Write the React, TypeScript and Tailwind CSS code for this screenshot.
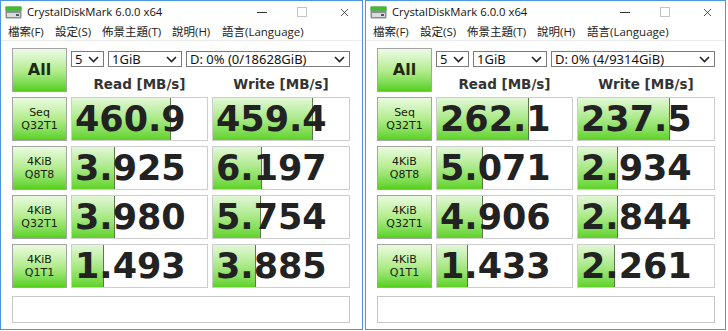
import { X } from 'lucide-react';

type Row = { top: string; bottom: string; read: number; write: number };

const leftRows: Row[] = [
  { top: 'Seq', bottom: 'Q32T1', read: 460.9, write: 459.4 },
  { top: '4KiB', bottom: 'Q8T8', read: 3.925, write: 6.197 },
  { top: '4KiB', bottom: 'Q32T1', read: 3.98, write: 5.754 },
  { top: '4KiB', bottom: 'Q1T1', read: 1.493, write: 3.885 },
];

const rightRows: Row[] = [
  { top: 'Seq', bottom: 'Q32T1', read: 262.1, write: 237.5 },
  { top: '4KiB', bottom: 'Q8T8', read: 5.071, write: 2.934 },
  { top: '4KiB', bottom: 'Q32T1', read: 4.906, write: 2.844 },
  { top: '4KiB', bottom: 'Q1T1', read: 1.433, write: 2.261 },
];

const menuItems = [
  { label: '檔案(F)', w: 'w-[47px]' },
  { label: '設定(S)', w: 'w-[47px]' },
  { label: '佈景主題(T)', w: 'w-[70px]' },
  { label: '說明(H)', w: 'w-[50px]' },
  { label: '語言(Language)', w: '' },
];

// log scale meter, same as the app
const meter = (v: number) => Math.max(0, Math.min(1, (1 + Math.log10(v)) / 5)) * 100;

const fmt = (v: number) => (v >= 100 ? v.toFixed(1) : v.toFixed(3));

const DiskIcon = () => (
  <svg width="17" height="13" viewBox="0 0 17 13">
    <rect x="0.5" y="0.5" width="16" height="12" rx="1" fill="#8a8f93" />
    <rect x="0.5" y="0.5" width="16" height="4" fill="#3fbf2a" />
    <rect x="2" y="7" width="13" height="4" fill="#d9dcde" />
    <rect x="11" y="8" width="3" height="2" fill="#555" />
  </svg>
);

const Chevron = () => (
  <svg width="11" height="7" viewBox="0 0 11 7" className="shrink-0">
    <path d="M1 1 L5.5 5.5 L10 1" fill="none" stroke="#222" strokeWidth="1.6" />
  </svg>
);

const Select = ({ label, className }: { label: string; className: string }) => (
  <div
    className={`flex h-[16px] items-center justify-between border border-[#7a7a7a] bg-white pl-[3px] pr-[4px] text-[13px] leading-none text-[#111] ${className}`}
  >
    <span>{label}</span>
    <Chevron />
  </div>
);

const LabelButton = ({ top, bottom }: { top: string; bottom: string }) => (
  <div className="flex h-[44px] flex-col items-center justify-center border border-[#a4a4a4] bg-linear-to-b from-[#eafbe0] via-[#b3ec8c] to-[#55d112] font-['DejaVu_Sans'] text-[11px] leading-[13px] text-[#16220d]">
    <span>{top}</span>
    <span>{bottom}</span>
  </div>
);

const ValueCell = ({ value }: { value: number }) => (
  <div className="relative h-[44px] overflow-hidden border border-[#cdcdcd] bg-white">
    <div
      className="absolute inset-y-0 left-0 border-r border-[#5b7a4c] bg-linear-to-b from-[#e2f7d6] via-[#a9e985] to-[#5fd322]"
      style={{ width: `${meter(value)}%` }}
    />
    <div className="relative flex h-full items-center pl-[3px] font-['DejaVu_Sans'] text-[35px] font-bold leading-none text-[#222]">
      {fmt(value)}
    </div>
  </div>
);

const Window = ({ drive, rows, width }: { drive: string; rows: Row[]; width: string }) => (
  <div className={`flex h-[330px] shrink-0 flex-col border border-[#4b97dc] bg-white ${width}`}>
    {/* Title bar */}
    <div className="flex h-[22px] items-center">
      <div className="ml-[4px] mr-[5px] mt-[1px]">
        <DiskIcon />
      </div>
      <span className="mt-[1px] font-['Open_Sans'] text-[11.3px] text-[#111]">CrystalDiskMark 6.0.0 x64</span>
      <div className="ml-auto flex items-center">
        <div className="mr-[30px] h-px w-[10px] bg-[#333]" />
        <div className="mr-[31px] h-[10px] w-[10px] border border-[#c4c4c4]" />
        <X className="mr-[11px] h-[13px] w-[13px] text-[#222]" strokeWidth={1.4} />
      </div>
    </div>

    {/* Menu */}
    <div className="flex h-[18px] items-center border-b border-[#ececec] pl-[7px] font-['Open_Sans','Noto_Sans_CJK_TC',sans-serif] text-[11.5px] text-[#222]">
      {menuItems.map((m) => (
        <span key={m.label} className={`shrink-0 whitespace-nowrap ${m.w}`}>
          {m.label}
        </span>
      ))}
    </div>

    {/* Content */}
    <div className="flex flex-col px-[11px] pt-[7px]">
      <div className="grid grid-cols-[55px_137px_138px] gap-x-[4px] gap-y-[5px]">
        <div className="flex h-[44px] items-center justify-center border border-[#a4a4a4] bg-linear-to-b from-[#eefbe6] via-[#b5ed90] to-[#52cf0e] font-['DejaVu_Sans'] text-[16px] font-bold text-[#1d2a12]">
          All
        </div>
        <div className="col-span-2 flex h-[44px] flex-col">
          <div className="mt-[3px] flex gap-[4px]">
            <Select label="5" className="w-[33px]" />
            <Select label="1GiB" className="w-[74px]" />
            <Select label={drive} className="flex-1" />
          </div>
          <div className="mt-[7px] grid grid-cols-[137px_138px] gap-x-[4px] font-['DejaVu_Sans'] text-[13.5px] font-bold text-[#333]">
            <span className="text-center">Read [MB/s]</span>
            <span className="text-center">Write [MB/s]</span>
          </div>
        </div>

        {rows.map((r, i) => (
          <div key={i} className="contents">
            <LabelButton top={r.top} bottom={r.bottom} />
            <ValueCell value={r.read} />
            <ValueCell value={r.write} />
          </div>
        ))}
      </div>

      {/* Comment box */}
      <div className="mt-[8px] h-[27px] w-[338px] border border-[#c6c6c6] bg-white" />
    </div>
  </div>
);

export default function App() {
  return (
    <div className="flex h-[331px] w-[728px] gap-[2px] overflow-hidden bg-white">
      <Window drive="D: 0% (0/18628GiB)" rows={leftRows} width="w-[363px]" />
      <Window drive="D: 0% (4/9314GiB)" rows={rightRows} width="w-[361px]" />
    </div>
  );
}
